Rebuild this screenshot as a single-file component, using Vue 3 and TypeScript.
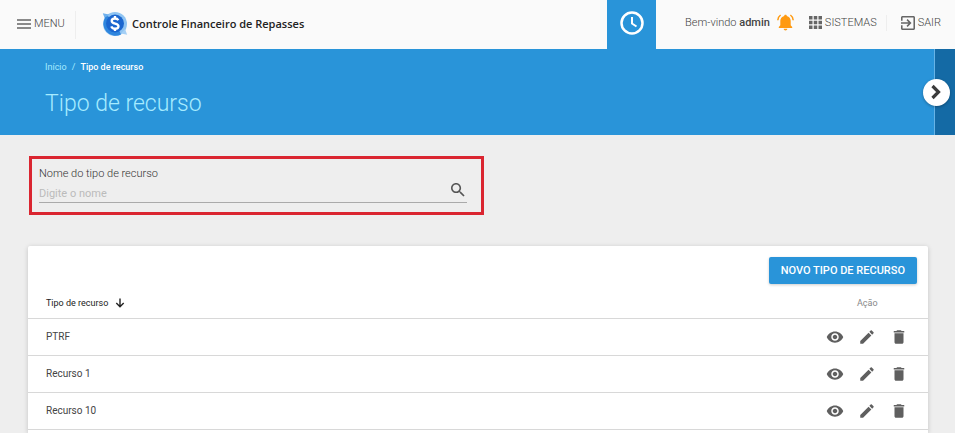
<script setup lang="ts">
import { ref, computed } from 'vue'

const search = ref('')
const ascending = ref(true)
const resources = ref<string[]>(['PTRF', 'Recurso 1', 'Recurso 10'])

const rows = computed(() => {
  const term = search.value.trim().toLowerCase()
  const found = resources.value.filter((name) => name.toLowerCase().includes(term))
  return ascending.value ? found : [...found].reverse()
})
</script>

<template>
  <div class="page">
    <header class="topbar">
      <button class="menu" type="button">
        <svg class="menu-icon" viewBox="0 0 14 10" aria-hidden="true">
          <path d="M0 1h14M0 5h14M0 9h14" fill="none" stroke="currentColor" stroke-width="1.7" />
        </svg>
        MENU
      </button>
      <a class="brand" href="#">
        <svg class="logo" viewBox="0 0 26 26" aria-hidden="true">
          <circle cx="13" cy="13" r="12" fill="#8fc4f2" />
          <path d="M.8 2.2 7 3.4 3 8Z" fill="#6fb0ec" />
          <path d="M25.2 23.8 19 22.6 23 18Z" fill="#a5d0f5" />
          <path d="M3.500 6A12 12 0 0 0 19 23.400L17 19 6 5Z" fill="#2f86dd" />
          <circle cx="13" cy="12.500" r="9" fill="#1b66cf" />
          <path
            d="M16.300 9.200C15.700 8 14.500 7.500 13 7.500 11 7.500 9.700 8.500 9.700 10c0 3.600 6.800 1.700 6.800 5.200 0 1.500-1.400 2.500-3.500 2.500-1.900 0-3.200-.8-3.700-2.300M13 5v2.500M13 17.700V20"
            fill="none"
            stroke="#fff"
            stroke-width="2.300"
          />
        </svg>
        <span>Controle Financeiro de Repasses</span>
      </a>
      <button class="clock" type="button" aria-label="Sessão">
        <svg viewBox="0 0 24 24" aria-hidden="true">
          <circle cx="12" cy="12" r="10.500" fill="none" stroke="#fff" stroke-width="2.500" />
          <path d="M12 6v6.500l4.500 3" fill="none" stroke="#fff" stroke-width="2" />
        </svg>
      </button>
      <div class="account">
        <span class="welcome">Bem-vindo <b>admin</b></span>
        <button class="bell" type="button" aria-label="Notificações">
          <svg viewBox="0 0 17 17" aria-hidden="true">
            <path
              fill="currentColor"
              d="M8.500.800c.8 0 1.300.5 1.300 1.200 2.400.6 3.900 2.500 3.900 4.800v4.400l1.500 1.900v1H1.800v-1l1.500-1.900V6.800C3.300 4.500 4.800 2.600 7.200 2 7.200 1.300 7.700.8 8.500.8zM6.700 14.800h3.600c0 1-.8 1.700-1.800 1.700s-1.800-.7-1.800-1.700z"
            />
            <path
              d="M3.600 1C2 2.100.9 3.900.8 6.200M13.400 1c1.600 1.100 2.700 2.900 2.800 5.200"
              fill="none"
              stroke="currentColor"
              stroke-width="1.500"
            />
          </svg>
        </button>
        <a class="systems" href="#">
          <svg viewBox="0 0 13 13" aria-hidden="true">
            <path
              fill="currentColor"
              d="M0 0h3.500v3.500H0zM4.750 0h3.500v3.500h-3.500zM9.500 0H13v3.500H9.500zM0 4.750h3.500v3.500H0zM4.750 4.750h3.500v3.500h-3.500zM9.500 4.750H13v3.500H9.500zM0 9.500h3.500V13H0zM4.750 9.500h3.500V13h-3.500zM9.500 9.500H13V13H9.500z"
            />
          </svg>
          SISTEMAS
        </a>
        <a class="logout" href="#">
          <svg viewBox="3 3 18 18" aria-hidden="true">
            <path
              fill="currentColor"
              d="M10.090 15.590 11.500 17l5-5-5-5-1.410 1.410L12.670 11H3v2h9.670l-2.580 2.590zM19 3H5c-1.110 0-2 .9-2 2v4h2V5h14v14H5v-4H3v4c0 1.100.89 2 2 2h14c1.100 0 2-.9 2-2V5c0-1.100-.9-2-2-2z"
            />
          </svg>
          SAIR
        </a>
      </div>
    </header>

    <section class="banner">
      <div class="heading">
        <nav class="crumbs" aria-label="Trilha">
          <a href="#">Início</a>
          <span>/</span>
          <b>Tipo de recurso</b>
        </nav>
        <h1>Tipo de recurso</h1>
      </div>
      <aside class="drawer">
        <button class="drawer-toggle" type="button" aria-label="Abrir painel">
          <svg viewBox="0 0 12 16" aria-hidden="true">
            <path d="m2.500 2 6 6-6 6" fill="none" stroke="#3c3c3c" stroke-width="3.200" />
          </svg>
        </button>
      </aside>
    </section>

    <main class="content">
      <form class="search" @submit.prevent>
        <label for="name">Nome do tipo de recurso</label>
        <div class="field">
          <input id="name" v-model="search" type="text" placeholder="Digite o nome" />
          <button type="submit" aria-label="Pesquisar">
            <svg viewBox="3 3 18 18" aria-hidden="true">
              <path
                fill="currentColor"
                d="M15.500 14h-.79l-.28-.27C15.410 12.590 16 11.110 16 9.500 16 5.910 13.090 3 9.500 3S3 5.910 3 9.500 5.910 16 9.500 16c1.610 0 3.090-.59 4.230-1.570l.27.28v.79l5 4.990L20.490 19l-4.990-5zm-6 0C7.010 14 5 11.990 5 9.500S7.010 5 9.500 5 14 7.010 14 9.500 11.990 14 9.500 14z"
              />
            </svg>
          </button>
        </div>
      </form>

      <section class="card">
        <div class="actions">
          <button class="primary" type="button">NOVO TIPO DE RECURSO</button>
        </div>
        <table>
          <thead>
            <tr>
              <th scope="col">
                <button class="sort" type="button" @click="ascending = !ascending">
                  Tipo de recurso
                  <svg viewBox="0 0 10 10" aria-hidden="true">
                    <path d="M5 .5v8M1.300 5 5 8.700 8.700 5" fill="none" stroke="currentColor" stroke-width="1.400" />
                  </svg>
                </button>
              </th>
              <th class="action-head" scope="col">Ação</th>
            </tr>
          </thead>
          <tbody>
            <tr v-for="name in rows" :key="name">
              <td>{{ name }}</td>
              <td>
                <div class="tools">
                  <button type="button" aria-label="Visualizar">
                    <svg viewBox="0 0 24 24" aria-hidden="true">
                      <path
                        fill="currentColor"
                        d="M12 4.500C7 4.500 2.730 7.610 1 12c1.730 4.390 6 7.500 11 7.500s9.270-3.110 11-7.500c-1.730-4.390-6-7.500-11-7.500zM12 17c-2.760 0-5-2.240-5-5s2.240-5 5-5 5 2.240 5 5-2.240 5-5 5zm0-8c-1.660 0-3 1.340-3 3s1.340 3 3 3 3-1.340 3-3-1.340-3-3-3z"
                      />
                    </svg>
                  </button>
                  <button type="button" aria-label="Editar">
                    <svg viewBox="0 0 24 24" aria-hidden="true">
                      <path
                        fill="currentColor"
                        d="M3 17.250V21h3.750L17.810 9.940l-3.750-3.750L3 17.250zM20.710 7.040c.39-.39.39-1.020 0-1.410l-2.340-2.340c-.39-.39-1.020-.39-1.410 0l-1.830 1.830 3.750 3.750 1.830-1.830z"
                      />
                    </svg>
                  </button>
                  <button type="button" aria-label="Excluir">
                    <svg viewBox="0 0 24 24" aria-hidden="true">
                      <path
                        fill="currentColor"
                        d="M6 19c0 1.100.9 2 2 2h8c1.100 0 2-.9 2-2V7H6v12zM19 4h-3.500l-1-1h-5l-1 1H5v2h14V4z"
                      />
                    </svg>
                  </button>
                </div>
              </td>
            </tr>
          </tbody>
        </table>
      </section>
    </main>
  </div>
</template>

<style>
body {
  margin: 0;
  background: #eee;
}
</style>

<style scoped>
.page {
  display: flex;
  flex-direction: column;
  min-height: 100vh;
  font: 11px/16px Roboto, "Liberation Sans", sans-serif;
  color: #555;
}

.page * {
  box-sizing: border-box;
}

button {
  display: flex;
  align-items: center;
  padding: 0;
  border: 0;
  background: none;
  color: inherit;
  font: inherit;
  cursor: pointer;
}

a {
  color: inherit;
  text-decoration: none;
}

svg {
  display: block;
  flex: none;
}

.topbar {
  display: flex;
  align-items: center;
  height: 49px;
  padding-left: 17px;
  padding-right: 14px;
  background: #fafafa;
  font-weight: 300;
}

.menu {
  gap: 3px;
  width: 59px;
  height: 28px;
  padding-bottom: 2px;
  border-right: 1px solid #eee;
  color: #444;
}

.menu-icon {
  width: 14px;
  height: 10px;
}

.brand {
  display: flex;
  align-items: center;
  gap: 4px;
  margin-left: 26px;
  padding-bottom: 2px;
  color: #222;
  font: 600 11px/16px "Open Sans", "Noto Sans", sans-serif;
}

.logo {
  width: 26px;
  height: 26px;
}

.clock {
  justify-content: center;
  width: 49px;
  height: 49px;
  margin-left: auto;
  padding-bottom: 4px;
  background: #2994d9;
}

.clock svg {
  width: 24px;
  height: 24px;
}

.account {
  display: flex;
  align-items: center;
  margin-left: 29px;
  padding-bottom: 4px;
  color: #444;
}

.account b {
  font-weight: 500;
}

.bell {
  margin-left: 7px;
  color: #ff9a10;
}

.bell svg {
  width: 17px;
  height: 17px;
}

.systems,
.logout {
  display: flex;
  align-items: center;
  gap: 3px;
}

.systems {
  margin-left: 15px;
  padding-right: 9px;
  border-right: 1px solid #eee;
}

.systems svg {
  width: 13px;
  height: 13px;
}

.logout {
  margin-left: 14px;
}

.logout svg {
  width: 14px;
  height: 14px;
}

.account a svg,
.menu-icon {
  color: #666;
}

.banner {
  display: flex;
  justify-content: space-between;
  background: #2994d9;
}

.heading {
  padding: 10px 0 16px 45px;
}

.crumbs {
  display: flex;
  gap: 5px;
  color: #a6ebff;
  font-size: 9px;
}

.crumbs b {
  color: #fff;
  font-weight: 500;
}

h1 {
  margin: 14px 0 0;
  color: #a6ebff;
  font-size: 23px;
  font-weight: 300;
  line-height: 30px;
}

.drawer {
  display: flex;
  align-items: center;
  justify-content: center;
  width: 21px;
  border-left: 1px solid #66b3e6;
  background: #146aa5;
}

.drawer-toggle {
  flex: none;
  justify-content: center;
  width: 27px;
  height: 27px;
  margin-right: 18px;
  border-radius: 50%;
  background: #fff;
  box-shadow: 0 1px 3px rgba(0, 0, 0, 0.3);
}

.drawer-toggle svg {
  width: 12px;
  height: 16px;
}

.content {
  display: flex;
  flex: 1;
  flex-direction: column;
  padding: 21px 27px 0 28px;
}

.search {
  width: 100%;
  max-width: 455px;
  margin-left: 1px;
  padding: 7px 14px 9px 7px;
  border: 3px solid #da2530;
}

.search label {
  display: block;
  color: #333;
  font-weight: 300;
}

.field {
  display: flex;
  align-items: center;
  height: 21px;
  border-bottom: 1px solid #aaa;
}

.field input {
  flex: 1;
  min-width: 0;
  padding: 4px 0 0;
  border: 0;
  outline: 0;
  background: none;
  color: inherit;
  font: inherit;
}

.field input::placeholder {
  color: #bbb;
  opacity: 1;
}

.field button {
  padding-right: 2px;
  padding-bottom: 5px;
}

.field button svg {
  width: 14px;
  height: 14px;
}

.card {
  flex: 1;
  margin-top: 31px;
  border-radius: 2px 2px 0 0;
  background: #fff;
  box-shadow: 0 1px 5px rgba(0, 0, 0, 0.18);
}

.actions {
  display: flex;
  justify-content: flex-end;
  padding: 11px 11px 0;
}

.primary {
  height: 27px;
  padding: 0 12px;
  border-radius: 2px;
  background: #2994d9;
  box-shadow: 0 1px 3px rgba(0, 0, 0, 0.2);
  color: #fff;
  font-weight: 500;
}

table {
  width: 100%;
  border-collapse: separate;
  border-spacing: 0;
  font-size: 10px;
}

th,
td {
  height: 37px;
  padding: 0 18px;
  border-bottom: 1px solid #d8d8d8;
  text-align: left;
}

th {
  height: 35px;
  padding-top: 3px;
  color: #888;
  font-size: 9px;
  font-weight: 400;
}

td {
  color: #444;
}

.sort {
  gap: 7px;
  color: #222;
}

.sort svg {
  width: 10px;
  height: 10px;
}

th:last-child,
td:last-child {
  width: 121px;
  padding-right: 0;
}

.action-head {
  padding-left: 50px;
}

td:last-child {
  padding-left: 19px;
}

.tools {
  display: flex;
  gap: 14px;
  color: #5f5f5f;
}

.tools svg {
  width: 18px;
  height: 18px;
}
</style>
